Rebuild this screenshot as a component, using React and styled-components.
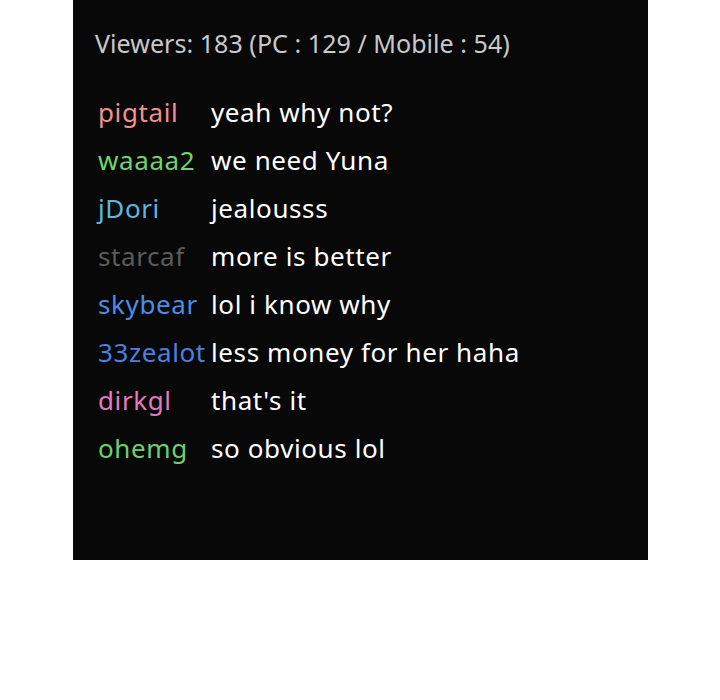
import React from 'react'
import styled, { createGlobalStyle } from 'styled-components'

const GlobalStyle = createGlobalStyle`
  html, body {
    margin: 0;
    padding: 0;
    background: #ffffff;
  }
`

const Page = styled.div`
  padding-left: 73px;
`

const Panel = styled.div`
  width: 575px;
  height: 560px;
  box-sizing: border-box;
  background: #080808;
  padding: 27px 22px 0 22px;
  font-family: 'Noto Sans', 'Open Sans', sans-serif;
`

const Header = styled.div`
  color: #c9c9c9;
  font-size: 25px;
  line-height: 32px;
  letter-spacing: 0.05px;
  margin-bottom: 29px;
`

const ChatList = styled.div`
  display: flex;
  flex-direction: column;
  padding-left: 3px;
`

const Row = styled.div`
  display: grid;
  grid-template-columns: 113px 1fr;
  font-size: 26px;
  line-height: 48px;
  letter-spacing: 0.6px;
  white-space: nowrap;
`

const Name = styled.span`
  color: ${(p) => p.color};
`

const Message = styled.span`
  color: #ffffff;
`

const messages = [
  { name: 'pigtail', color: '#f2908b', text: 'yeah why not?' },
  { name: 'waaaa2', color: '#6fd56b', text: 'we need Yuna' },
  { name: 'jDori', color: '#5cb6e2', text: 'jealousss' },
  { name: 'starcaf', color: '#5b5b5b', text: 'more is better' },
  { name: 'skybear', color: '#4b8ee9', text: 'lol i know why' },
  { name: '33zealot', color: '#4a80e2', text: 'less money for her haha' },
  { name: 'dirkgl', color: '#e07cba', text: "that's it" },
  { name: 'ohemg', color: '#6fd06b', text: 'so obvious lol' },
]

export default function App() {
  return (
    <Page>
      <GlobalStyle />
      <Panel>
        <Header>Viewers: 183 (PC : 129 / Mobile : 54)</Header>
        <ChatList>
          {messages.map((m) => (
            <Row key={m.name}>
              <Name color={m.color}>{m.name}</Name>
              <Message>{m.text}</Message>
            </Row>
          ))}
        </ChatList>
      </Panel>
    </Page>
  )
}
